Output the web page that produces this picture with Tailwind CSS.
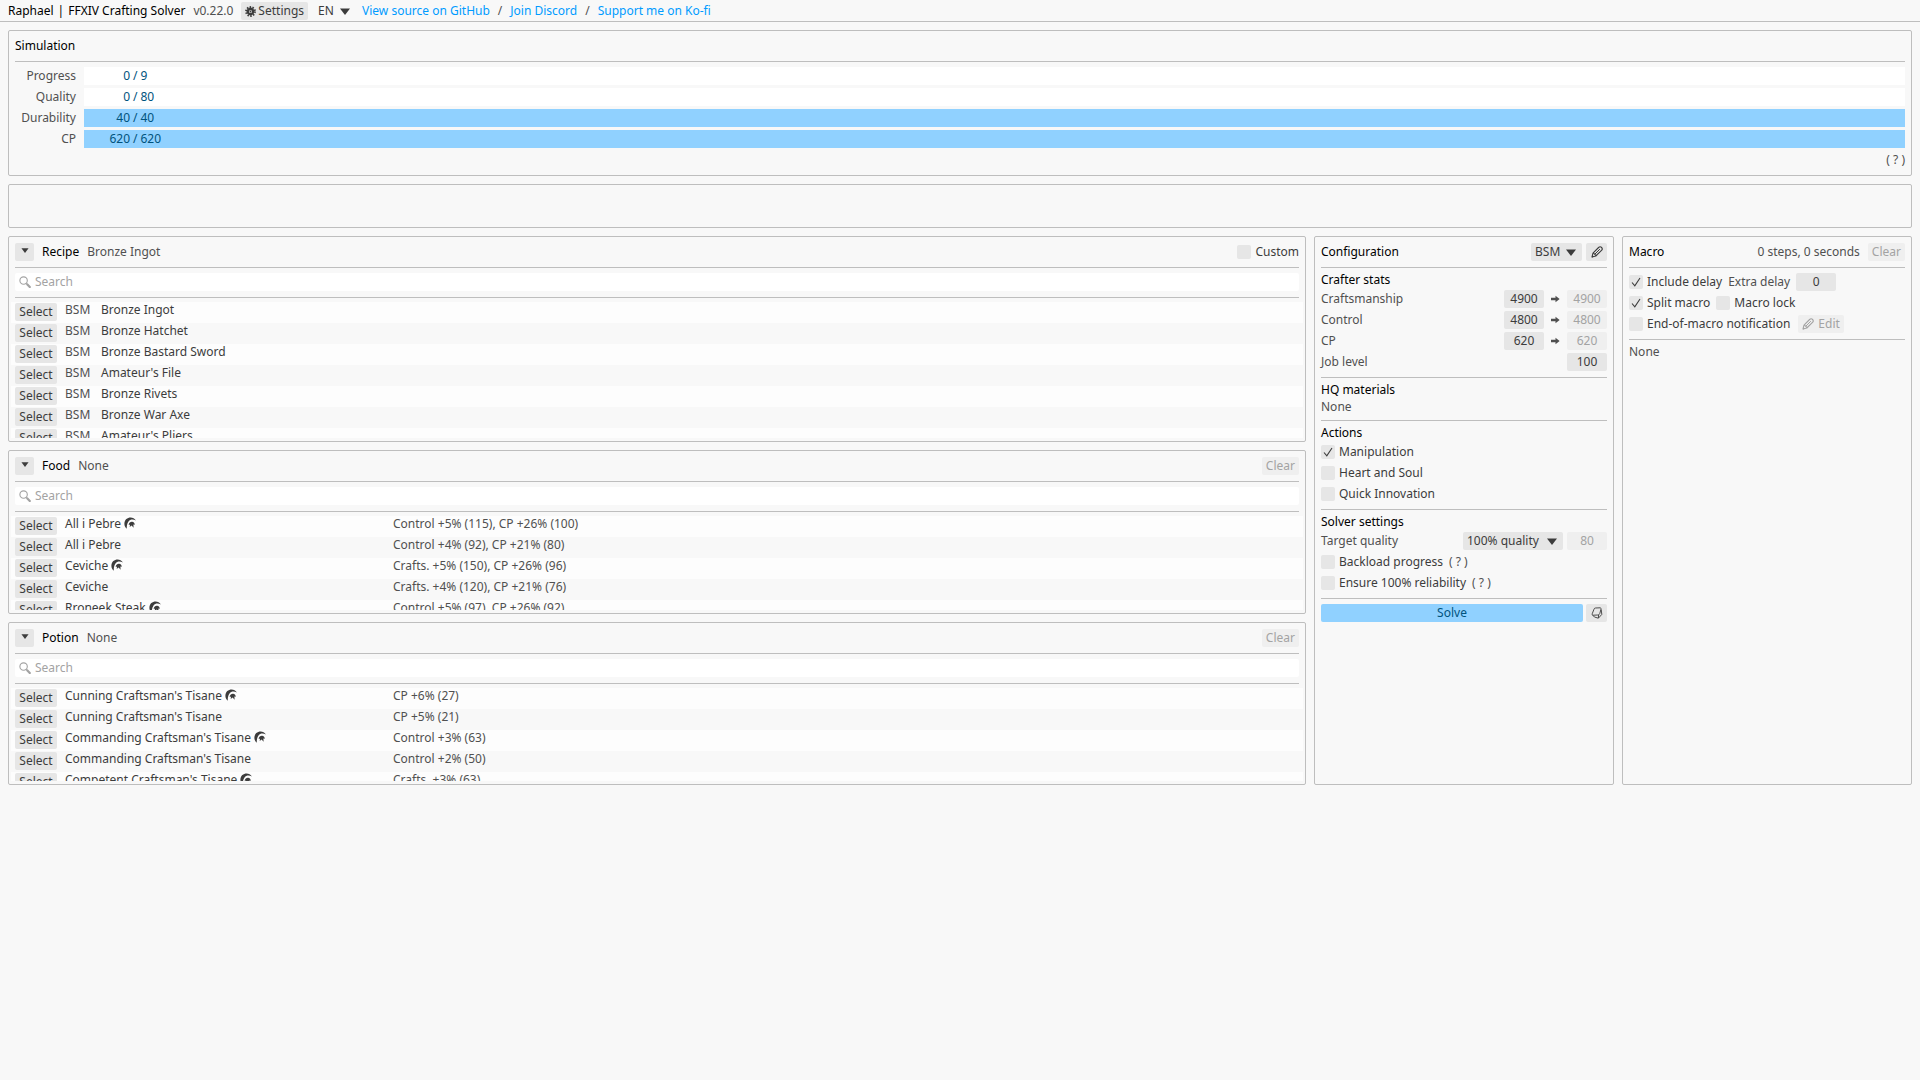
<!DOCTYPE html>
<html lang="en">

<head>
    <meta charset="UTF-8">
    <meta name="viewport" content="width=device-width, initial-scale=1.0">
    <title>Raphael | FFXIV Crafting Solver</title>
    <script src="https://cdn.jsdelivr.net/npm/@tailwindcss/browser@4"></script>
</head>

<body class="bg-[#f8f8f8] font-['Noto_Sans','Open_Sans',sans-serif] text-[12px] leading-[18px] text-[#505050] min-h-screen">

    <!-- Shared icons -->
    <svg class="hidden">
        <symbol id="icon-arrow" viewBox="0 0 10 7"><path d="M0 0.5H10L5 7Z" fill="currentColor"/></symbol>
        <symbol id="icon-check" viewBox="0 0 14 14"><path d="M3 7.5L5.8 10.8L11 3" fill="none" stroke="currentColor" stroke-width="1.1"/></symbol>
        <symbol id="icon-search" viewBox="0 0 12 12">
            <circle cx="4.6" cy="4.6" r="3.7" fill="none" stroke="currentColor" stroke-width="1.1"/>
            <path d="M7.2 7.3L8.2 8.3" stroke="currentColor" stroke-width="1.1"/>
            <path d="M8.4 8.4L10.8 11" stroke="currentColor" stroke-width="2.2" stroke-linecap="round"/>
        </symbol>
        <symbol id="icon-pencil" viewBox="0 0 12 12">
            <path d="M1 11L2 7.2L7.6 1.5C8.6 .6 9.8 .7 10.6 1.5C11.4 2.3 11.4 3.5 10.5 4.4L4.8 10Z" fill="none" stroke="currentColor" stroke-width="1.1" stroke-linejoin="round"/>
            <path d="M3.4 8.6L8.9 3.1M2 7.2C3.4 7.2 4.8 8.6 4.8 10M1 11L2.2 10.6" fill="none" stroke="currentColor"/>
        </symbol>
        <symbol id="icon-hq" viewBox="0 0 11 11">
            <path d="M2.6 10.8C-.2 8.6-.4 4.4 2.1 1.9C4.8-.6 9.2 0 10.9 3.3C8.5 1.8 5.6 2.1 4.3 3.9C3 5.7 2.3 8 2.6 10.8Z" fill="currentColor"/>
            <path d="M4.2 7.1C4.6 5.2 6.1 4.1 7.4 4.3C8.9 4.5 9.9 5.7 9.9 7.2L8.6 6.8L8.8 9.8L7 7.8L5.2 9.2L5.5 7Z" fill="currentColor"/>
        </symbol>
        <symbol id="icon-right" viewBox="0 0 10 8"><path d="M0 2.7H5V.4L9.6 4L5 7.6V5.3H0Z" fill="currentColor"/></symbol>
    </svg>

    <header class="flex items-center gap-2 h-[22px] px-2 pt-0.5 pb-px border-b border-[#bebebe]">
        <h1 class="flex gap-1 text-black"><span>Raphael</span><span>|</span><span>FFXIV Crafting Solver</span></h1>
        <span>v0.22.0</span>
        <button class="flex items-center gap-0.5 h-[18px] px-1 rounded-xs bg-[#e6e6e6] text-[#3c3c3c]">
            <svg class="w-[11px] h-[11px]" viewBox="0 0 12 12">
                <circle cx="6" cy="6" r="4.9" fill="none" stroke="currentColor" stroke-width="2" stroke-dasharray="1.6 1.48"/>
                <circle cx="6" cy="6" r="3" fill="none" stroke="currentColor" stroke-width="2.6"/>
                <circle cx="6" cy="6" r="1" fill="currentColor"/>
            </svg>
            Settings
        </button>
        <div class="relative">
            <select aria-label="Language" class="block appearance-none w-[38px] h-[18px] pl-0.5 text-[#3c3c3c]">
                <option>EN</option>
            </select>
            <svg class="absolute right-1 top-1.5 w-2.5 h-[7px] text-[#3c3c3c] pointer-events-none"><use href="#icon-arrow"/></svg>
        </div>
        <nav class="flex gap-2">
            <a href="#github" class="text-[#009bff]">View source on GitHub</a>
            <span>/</span>
            <a href="#discord" class="text-[#009bff]">Join Discord</a>
            <span>/</span>
            <a href="#kofi" class="text-[#009bff]">Support me on Ko-fi</a>
        </nav>
    </header>

    <main class="flex flex-col gap-2 p-2">

        <section class="flex flex-col gap-[3px] p-1.5 border border-[#bebebe] rounded-xs">
            <h2 class="text-black">Simulation</h2>
            <hr class="mt-[3px] mb-0.5 border-[#bebebe]">
            <div id="bars" class="flex flex-col gap-[3px]"></div>
            <div class="text-right">( ? )</div>
        </section>

        <section aria-label="Action sequence" class="h-11 border border-[#bebebe] rounded-xs"></section>

        <div class="flex gap-2 items-stretch">

            <div class="flex-1 min-w-0 flex flex-col gap-2">
                <section class="px-1.5 pt-1.5 pb-[3px] border border-[#bebebe] rounded-xs">
                    <div class="flex items-center gap-2">
                        <button aria-label="Collapse recipes" class="flex justify-center items-center w-[19px] h-[18px] rounded-xs bg-[#e6e6e6] text-[#3c3c3c]">
                            <svg class="w-2 h-[5px] mb-[3px]"><use href="#icon-arrow"/></svg>
                        </button>
                        <h2 class="text-black">Recipe</h2>
                        <span>Bronze Ingot</span>
                        <label class="ml-auto flex items-center gap-1 text-[#3c3c3c]">
                            <input type="checkbox" class="appearance-none w-3.5 h-3.5 rounded-xs bg-[#e6e6e6]">
                            Custom
                        </label>
                    </div>
                    <hr class="mt-1.5 mb-[5px] border-[#bebebe]">
                    <label class="flex items-center gap-1 h-[18px] px-1 rounded-xs bg-white text-[#a3a3a3]">
                        <svg class="w-3 h-3"><use href="#icon-search"/></svg>
                        <input type="text" aria-label="Search recipes" placeholder="Search" class="flex-1 h-[18px] outline-none placeholder:text-[#a3a3a3]">
                    </label>
                    <hr class="mt-1.5 mb-1 border-[#bebebe]">
                    <div class="-mx-1 h-[136px] overflow-hidden">
                        <table class="w-full table-fixed"><tbody id="recipes"></tbody></table>
                    </div>
                </section>

                <section class="px-1.5 pt-1.5 pb-[3px] border border-[#bebebe] rounded-xs">
                    <div class="flex items-center gap-2">
                        <button aria-label="Collapse food" class="flex justify-center items-center w-[19px] h-[18px] rounded-xs bg-[#e6e6e6] text-[#3c3c3c]">
                            <svg class="w-2 h-[5px] mb-[3px]"><use href="#icon-arrow"/></svg>
                        </button>
                        <h2 class="text-black">Food</h2>
                        <span>None</span>
                        <button disabled class="ml-auto h-[18px] px-1 rounded-xs bg-[#efefef] text-[#a3a3a3]">Clear</button>
                    </div>
                    <hr class="mt-1.5 mb-[5px] border-[#bebebe]">
                    <label class="flex items-center gap-1 h-[18px] px-1 rounded-xs bg-white text-[#a3a3a3]">
                        <svg class="w-3 h-3"><use href="#icon-search"/></svg>
                        <input type="text" aria-label="Search food" placeholder="Search" class="flex-1 h-[18px] outline-none placeholder:text-[#a3a3a3]">
                    </label>
                    <hr class="mt-1.5 mb-1 border-[#bebebe]">
                    <div class="-mx-1 h-[94px] overflow-hidden">
                        <table class="w-full table-fixed"><tbody id="food"></tbody></table>
                    </div>
                </section>

                <section class="px-1.5 pt-1.5 pb-[3px] border border-[#bebebe] rounded-xs">
                    <div class="flex items-center gap-2">
                        <button aria-label="Collapse potions" class="flex justify-center items-center w-[19px] h-[18px] rounded-xs bg-[#e6e6e6] text-[#3c3c3c]">
                            <svg class="w-2 h-[5px] mb-[3px]"><use href="#icon-arrow"/></svg>
                        </button>
                        <h2 class="text-black">Potion</h2>
                        <span>None</span>
                        <button disabled class="ml-auto h-[18px] px-1 rounded-xs bg-[#efefef] text-[#a3a3a3]">Clear</button>
                    </div>
                    <hr class="mt-1.5 mb-[5px] border-[#bebebe]">
                    <label class="flex items-center gap-1 h-[18px] px-1 rounded-xs bg-white text-[#a3a3a3]">
                        <svg class="w-3 h-3"><use href="#icon-search"/></svg>
                        <input type="text" aria-label="Search potions" placeholder="Search" class="flex-1 h-[18px] outline-none placeholder:text-[#a3a3a3]">
                    </label>
                    <hr class="mt-1.5 mb-1 border-[#bebebe]">
                    <div class="-mx-1 h-[93px] overflow-hidden">
                        <table class="w-full table-fixed"><tbody id="potions"></tbody></table>
                    </div>
                </section>
            </div>

            <section class="w-[300px] shrink-0 flex flex-col gap-[3px] p-1.5 border border-[#bebebe] rounded-xs">
                <div class="flex items-center gap-1">
                    <h2 class="mr-auto text-black">Configuration</h2>
                    <div class="relative">
                        <select aria-label="Job" class="block appearance-none w-[51px] h-[18px] pl-1 rounded-xs bg-[#e6e6e6] text-[#3c3c3c]">
                            <option>BSM</option>
                        </select>
                        <svg class="absolute right-1.5 top-1.5 w-2.5 h-[7px] text-[#3c3c3c] pointer-events-none"><use href="#icon-arrow"/></svg>
                    </div>
                    <button aria-label="Edit stats" class="flex justify-center items-center w-[21px] h-[18px] rounded-xs bg-[#e6e6e6] text-[#3c3c3c]">
                        <svg class="w-3 h-3"><use href="#icon-pencil"/></svg>
                    </button>
                </div>
                <hr class="mt-[3px] mb-0.5 border-[#bebebe]">

                <h3 class="leading-[14px] text-black">Crafter stats</h3>
                <div class="flex items-center">
                    <label for="craftsmanship" class="mr-auto">Craftsmanship</label>
                    <input id="craftsmanship" type="text" value="4900" class="w-10 h-[18px] rounded-xs bg-[#e6e6e6] text-[#3c3c3c] text-center">
                    <svg class="w-[9px] h-2 mx-[7px] text-[#505050]"><use href="#icon-right"/></svg>
                    <input type="text" aria-label="Effective craftsmanship" value="4900" disabled class="w-10 h-[18px] rounded-xs bg-[#efefef] text-[#a3a3a3] text-center">
                </div>
                <div class="flex items-center">
                    <label for="control" class="mr-auto">Control</label>
                    <input id="control" type="text" value="4800" class="w-10 h-[18px] rounded-xs bg-[#e6e6e6] text-[#3c3c3c] text-center">
                    <svg class="w-[9px] h-2 mx-[7px] text-[#505050]"><use href="#icon-right"/></svg>
                    <input type="text" aria-label="Effective control" value="4800" disabled class="w-10 h-[18px] rounded-xs bg-[#efefef] text-[#a3a3a3] text-center">
                </div>
                <div class="flex items-center">
                    <label for="cp" class="mr-auto">CP</label>
                    <input id="cp" type="text" value="620" class="w-10 h-[18px] rounded-xs bg-[#e6e6e6] text-[#3c3c3c] text-center">
                    <svg class="w-[9px] h-2 mx-[7px] text-[#505050]"><use href="#icon-right"/></svg>
                    <input type="text" aria-label="Effective CP" value="620" disabled class="w-10 h-[18px] rounded-xs bg-[#efefef] text-[#a3a3a3] text-center">
                </div>
                <div class="flex items-center">
                    <label for="level" class="mr-auto">Job level</label>
                    <input id="level" type="text" value="100" class="w-10 h-[18px] rounded-xs bg-[#e6e6e6] text-[#3c3c3c] text-center">
                </div>
                <hr class="mt-[3px] mb-0.5 border-[#bebebe]">

                <h3 class="leading-[14px] text-black">HQ materials</h3>
                <p class="leading-[14px]">None</p>
                <hr class="mt-[3px] mb-0.5 border-[#bebebe]">

                <h3 class="leading-[14px] text-black">Actions</h3>
                <label class="flex items-center gap-1 text-[#3c3c3c]">
                    <span class="relative flex">
                        <input type="checkbox" checked class="peer appearance-none w-3.5 h-3.5 rounded-xs bg-[#e6e6e6]">
                        <svg class="absolute inset-0 w-3.5 h-3.5 invisible peer-checked:visible"><use href="#icon-check"/></svg>
                    </span>
                    Manipulation
                </label>
                <label class="flex items-center gap-1 text-[#3c3c3c]">
                    <input type="checkbox" class="appearance-none w-3.5 h-3.5 rounded-xs bg-[#e6e6e6]">
                    Heart and Soul
                </label>
                <label class="flex items-center gap-1 text-[#3c3c3c]">
                    <input type="checkbox" class="appearance-none w-3.5 h-3.5 rounded-xs bg-[#e6e6e6]">
                    Quick Innovation
                </label>
                <hr class="mt-[3px] mb-0.5 border-[#bebebe]">

                <h3 class="leading-[14px] text-black">Solver settings</h3>
                <div class="flex items-center gap-1">
                    <label for="target" class="mr-auto">Target quality</label>
                    <div class="relative">
                        <select id="target" class="block appearance-none w-[100px] h-[18px] pl-1 rounded-xs bg-[#e6e6e6] text-[#3c3c3c]">
                            <option>100% quality</option>
                        </select>
                        <svg class="absolute right-1.5 top-1.5 w-2.5 h-[7px] text-[#3c3c3c] pointer-events-none"><use href="#icon-arrow"/></svg>
                    </div>
                    <input type="text" aria-label="Target quality value" value="80" disabled class="w-10 h-[18px] rounded-xs bg-[#efefef] text-[#a3a3a3] text-center">
                </div>
                <div class="flex gap-1.5">
                    <label class="flex items-center gap-1 text-[#3c3c3c]">
                        <input type="checkbox" class="appearance-none w-3.5 h-3.5 rounded-xs bg-[#e6e6e6]">
                        Backload progress
                    </label>
                    <span>( ? )</span>
                </div>
                <div class="flex gap-1.5">
                    <label class="flex items-center gap-1 text-[#3c3c3c]">
                        <input type="checkbox" class="appearance-none w-3.5 h-3.5 rounded-xs bg-[#e6e6e6]">
                        Ensure 100% reliability
                    </label>
                    <span>( ? )</span>
                </div>
                <hr class="mt-[3px] mb-0.5 border-[#bebebe]">

                <div class="flex gap-[3px]">
                    <button class="flex-1 h-[18px] rounded-xs bg-[#90d1ff] text-[#00537d]">Solve</button>
                    <button aria-label="Clear cache" class="flex justify-center items-center w-[21px] h-[18px] rounded-xs bg-[#e6e6e6] text-[#3c3c3c]">
                        <svg class="w-3 h-3" viewBox="0 0 12 12" fill="none" stroke="currentColor" stroke-width="0.9" stroke-linejoin="round">
                            <path d="M4.4 1L9 .8C9.8 .8 10.2 1.4 10 2.2L8.8 6.4C8.4 7.6 7.8 8 6.8 8L2.4 8.2C1.4 8.2 1 7.6 1.2 6.8L3 2.2C3.3 1.4 3.7 1 4.4 1Z"/>
                            <path d="M1.4 7.8L3.4 10L7.4 11.2L10.8 7.4L10.2 2.6M7.6 7.8L7.4 11"/>
                        </svg>
                    </button>
                </div>
            </section>

            <section class="w-[290px] shrink-0 flex flex-col gap-[3px] p-1.5 border border-[#bebebe] rounded-xs">
                <div class="flex items-center gap-2">
                    <h2 class="mr-auto text-black">Macro</h2>
                    <span>0 steps, 0 seconds</span>
                    <button disabled class="h-[18px] px-1 rounded-xs bg-[#efefef] text-[#a3a3a3]">Clear</button>
                </div>
                <hr class="mt-[3px] mb-0.5 border-[#bebebe]">
                <div class="flex items-center gap-1.5">
                    <label class="flex items-center gap-1 text-[#3c3c3c]">
                        <span class="relative flex">
                            <input type="checkbox" checked class="peer appearance-none w-3.5 h-3.5 rounded-xs bg-[#e6e6e6]">
                            <svg class="absolute inset-0 w-3.5 h-3.5 invisible peer-checked:visible"><use href="#icon-check"/></svg>
                        </span>
                        Include delay
                    </label>
                    <label for="delay">Extra delay</label>
                    <input id="delay" type="text" value="0" class="w-10 h-[18px] rounded-xs bg-[#e6e6e6] text-[#3c3c3c] text-center">
                </div>
                <div class="flex items-center gap-1.5">
                    <label class="flex items-center gap-1 text-[#3c3c3c]">
                        <span class="relative flex">
                            <input type="checkbox" checked class="peer appearance-none w-3.5 h-3.5 rounded-xs bg-[#e6e6e6]">
                            <svg class="absolute inset-0 w-3.5 h-3.5 invisible peer-checked:visible"><use href="#icon-check"/></svg>
                        </span>
                        Split macro
                    </label>
                    <label class="flex items-center gap-1 text-[#3c3c3c]">
                        <input type="checkbox" class="appearance-none w-3.5 h-3.5 rounded-xs bg-[#e6e6e6]">
                        Macro lock
                    </label>
                </div>
                <div class="flex items-center gap-2">
                    <label class="flex items-center gap-1 text-[#3c3c3c]">
                        <input type="checkbox" class="appearance-none w-3.5 h-3.5 rounded-xs bg-[#e6e6e6]">
                        End-of-macro notification
                    </label>
                    <button disabled class="flex items-center gap-1 h-[18px] px-1 rounded-xs bg-[#efefef] text-[#a3a3a3]">
                        <svg class="w-3 h-3"><use href="#icon-pencil"/></svg>
                        Edit
                    </button>
                </div>
                <hr class="mt-[3px] mb-0.5 border-[#bebebe]">
                <p class="leading-[14px]">None</p>
            </section>
        </div>
    </main>

    <script>
        const bars = [
            ['Progress', 0, 9],
            ['Quality', 0, 80],
            ['Durability', 40, 40],
            ['CP', 620, 620],
        ];
        const recipes = [
            ['BSM', 'Bronze Ingot'],
            ['BSM', 'Bronze Hatchet'],
            ['BSM', 'Bronze Bastard Sword'],
            ['BSM', "Amateur's File"],
            ['BSM', 'Bronze Rivets'],
            ['BSM', 'Bronze War Axe'],
            ['BSM', "Amateur's Pliers"],
        ];
        // name, high quality, effect
        const food = [
            ['All i Pebre', true, 'Control +5% (115), CP +26% (100)'],
            ['All i Pebre', false, 'Control +4% (92), CP +21% (80)'],
            ['Ceviche', true, 'Crafts. +5% (150), CP +26% (96)'],
            ['Ceviche', false, 'Crafts. +4% (120), CP +21% (76)'],
            ['Rroneek Steak', true, 'Control +5% (97), CP +26% (92)'],
        ];
        const potions = [
            ["Cunning Craftsman's Tisane", true, 'CP +6% (27)'],
            ["Cunning Craftsman's Tisane", false, 'CP +5% (21)'],
            ["Commanding Craftsman's Tisane", true, 'Control +3% (63)'],
            ["Commanding Craftsman's Tisane", false, 'Control +2% (50)'],
            ["Competent Craftsman's Tisane", true, 'Crafts. +3% (63)'],
        ];

        const rowClass = 'h-[21px] leading-[15px] align-top odd:bg-[#fdfdfd]';
        const selectCell = '<td class="w-[54px] pl-1 pt-px"><button class="block w-[42px] h-[18px] leading-[18px] rounded-xs bg-[#e6e6e6] text-[#3c3c3c]">Select</button></td>';
        const hqIcon = '<svg class="inline-block w-3 h-3 ml-[3px] mb-[3px] text-[#3c3c3c]"><use href="#icon-hq"/></svg>';

        document.getElementById('bars').innerHTML = bars.map(([name, value, max]) => `
            <div class="flex gap-2">
                <span class="w-[61px] text-right">${name}</span>
                <div class="relative flex-1 h-[18px] bg-white text-[#00537d]" role="progressbar" aria-label="${name}" aria-valuenow="${value}" aria-valuemax="${max}">
                    <div class="h-full bg-[#90d1ff]" style="width: ${value / max * 100}%"></div>
                    <div class="absolute inset-0 flex gap-[3px]">
                        <span class="w-[46px] text-right">${value}</span><span>/</span><span>${max}</span>
                    </div>
                </div>
            </div>`).join('');

        document.getElementById('recipes').innerHTML = recipes.map(([job, name]) => `
            <tr class="${rowClass}">${selectCell}<td class="w-9">${job}</td><td class="text-[#3c3c3c]">${name}</td></tr>`).join('');

        function itemRows(items) {
            return items.map(([name, hq, effect]) => `
                <tr class="${rowClass}">${selectCell}<td class="w-[328px] text-[#3c3c3c]">${name}${hq ? hqIcon : ''}</td><td>${effect}</td></tr>`).join('');
        }
        document.getElementById('food').innerHTML = itemRows(food);
        document.getElementById('potions').innerHTML = itemRows(potions);
    </script>

</body>

</html>
